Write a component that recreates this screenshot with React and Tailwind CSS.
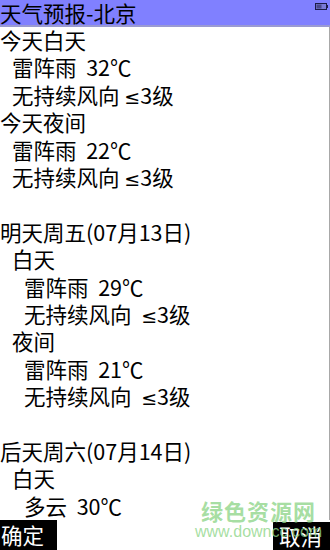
const lines = [
  { text: "今天白天", indent: 0 },
  { text: "雷阵雨  32℃", indent: 1 },
  { text: "无持续风向 ", le: "3级", indent: 1 },
  { text: "今天夜间", indent: 0 },
  { text: "雷阵雨  22℃", indent: 1 },
  { text: "无持续风向 ", le: "3级", indent: 1 },
  { text: "", indent: 0 },
  { text: "明天周五(07月13日)", indent: 0 },
  { text: "白天", indent: 1 },
  { text: "雷阵雨  29℃", indent: 2 },
  { text: "无持续风向  ", le: "3级", indent: 2 },
  { text: "夜间", indent: 1 },
  { text: "雷阵雨  21℃", indent: 2 },
  { text: "无持续风向  ", le: "3级", indent: 2 },
  { text: "", indent: 0 },
  { text: "后天周六(07月14日)", indent: 0 },
  { text: "白天", indent: 1 },
  { text: "多云  30℃", indent: 2 },
];

const indentClass = ["pl-0", "pl-[12px]", "pl-[24px]"];

function Battery() {
  return (
    <svg width="13" height="7" viewBox="0 0 13 7" className="absolute right-[2px] top-[3px]">
      <rect x="0.5" y="0.5" width="11" height="6" fill="#7a7ad8" stroke="#1c1c48" />
      <rect x="1.5" y="1.5" width="5" height="4" fill="#4a4a8a" />
      <rect x="12" y="2" width="1" height="3" fill="#1c1c48" />
    </svg>
  );
}

export default function App() {
  return (
    <div
      className="relative flex h-[550px] w-[330px] flex-col overflow-hidden bg-white text-black"
      style={{ fontFamily: '"Noto Sans CJK SC", "Noto Sans", sans-serif' }}
    >
      <div className="relative h-[27px] shrink-0 border-b-2 border-[#9a9ad2] bg-[#8080ff] text-[21.5px] leading-[25px]">
        天气预报-北京
        <Battery />
      </div>

      <div className="-mt-[1px] flex-1 border-r border-[#a8a8a8]">
        {lines.map((line, i) => (
          <div key={i} className={`h-[27.4px] whitespace-pre text-[21.5px] leading-[27.4px] ${indentClass[line.indent]}`}>
            {line.text}
            {line.le ? (
              <>
                <span style={{ fontFamily: '"DejaVu Sans", sans-serif' }} className="text-[19px]">≤</span>
                {line.le}
              </>
            ) : null}
          </div>
        ))}
      </div>

      <div className="flex h-[30px] shrink-0 items-end justify-between">
        <div className="h-[30px] w-[57px] bg-black pl-[1px] text-[21.5px] leading-[30px] text-white">确定</div>
        <div className="h-[28px] w-[57px] bg-black pl-[6px] text-[21.5px] leading-[28px] text-white">取消</div>
      </div>

      <div className="pointer-events-none absolute left-[195px] top-[498px] flex flex-col items-center">
        <div className="text-[22px] font-bold leading-[24px] tracking-[1px] text-[#8fd68a]/80">绿色资源网</div>
        <div
          className="text-[16px] leading-[20px] text-[#8fd68a]/80"
          style={{ fontFamily: '"Liberation Sans", sans-serif' }}
        >
          www.downcc.com
        </div>
      </div>
    </div>
  );
}
